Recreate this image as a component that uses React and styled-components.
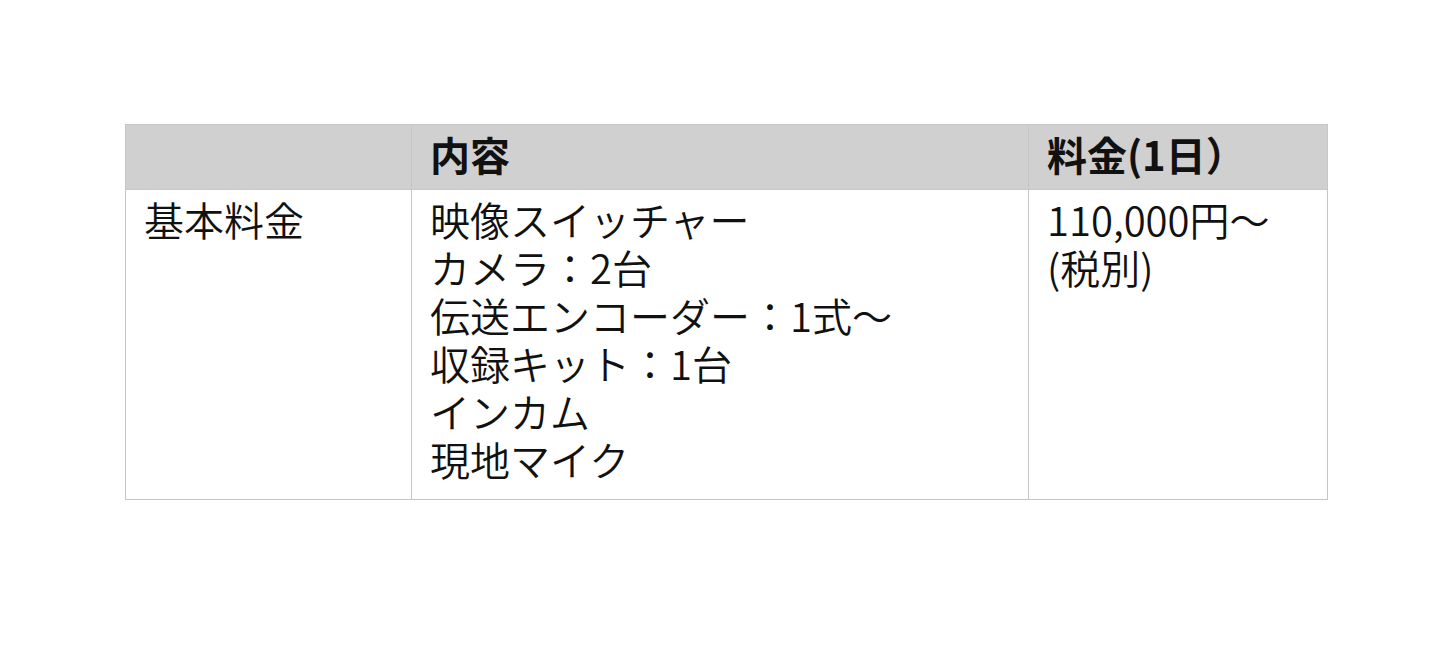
import React from "react";
import styled, { createGlobalStyle } from "styled-components";

const Global = createGlobalStyle`
  html, body { margin: 0; padding: 0; background: #ffffff; }
  body { font-family: "Noto Sans CJK JP", "Noto Sans", sans-serif; color: #111; }
`;

const Page = styled.div`
  width: 1440px;
  height: 666px;
  padding: 124px 0 0 125px;
  box-sizing: border-box;
`;

const Table = styled.table`
  border-collapse: collapse;
  table-layout: fixed;
  width: 1202px;
  font-size: 40px;
  line-height: 48px;
`;

const Col = styled.col`
  width: ${(p) => p.$w}px;
`;

const Th = styled.th`
  background: #d0d0d0;
  border: 1px solid #c6c6c6;
  font-weight: 700;
  text-align: left;
  padding: 5px 18px 11px;
  height: 48px;
  color: #111;
`;

const Td = styled.td`
  border: 1px solid #c6c6c6;
  text-align: left;
  vertical-align: top;
  padding: 5px 18px 16px;
  font-weight: 350;
`;

const Line = styled.div`
  white-space: nowrap;
`;

const items = [
  "映像スイッチャー",
  "カメラ：2台",
  "伝送エンコーダー：1式～",
  "収録キット：1台",
  "インカム",
  "現地マイク",
];

export default function App() {
  return (
    <Page>
      <Global />
      <Table>
        <colgroup>
          <Col $w={286} />
          <Col $w={617} />
          <Col $w={299} />
        </colgroup>
        <thead>
          <tr>
            <Th></Th>
            <Th>内容</Th>
            <Th>料金(1日）</Th>
          </tr>
        </thead>
        <tbody>
          <tr>
            <Td>基本料金</Td>
            <Td>
              {items.map((t) => (
                <Line key={t}>{t}</Line>
              ))}
            </Td>
            <Td>
              <Line>110,000円～</Line>
              <Line>(税別)</Line>
            </Td>
          </tr>
        </tbody>
      </Table>
    </Page>
  );
}
